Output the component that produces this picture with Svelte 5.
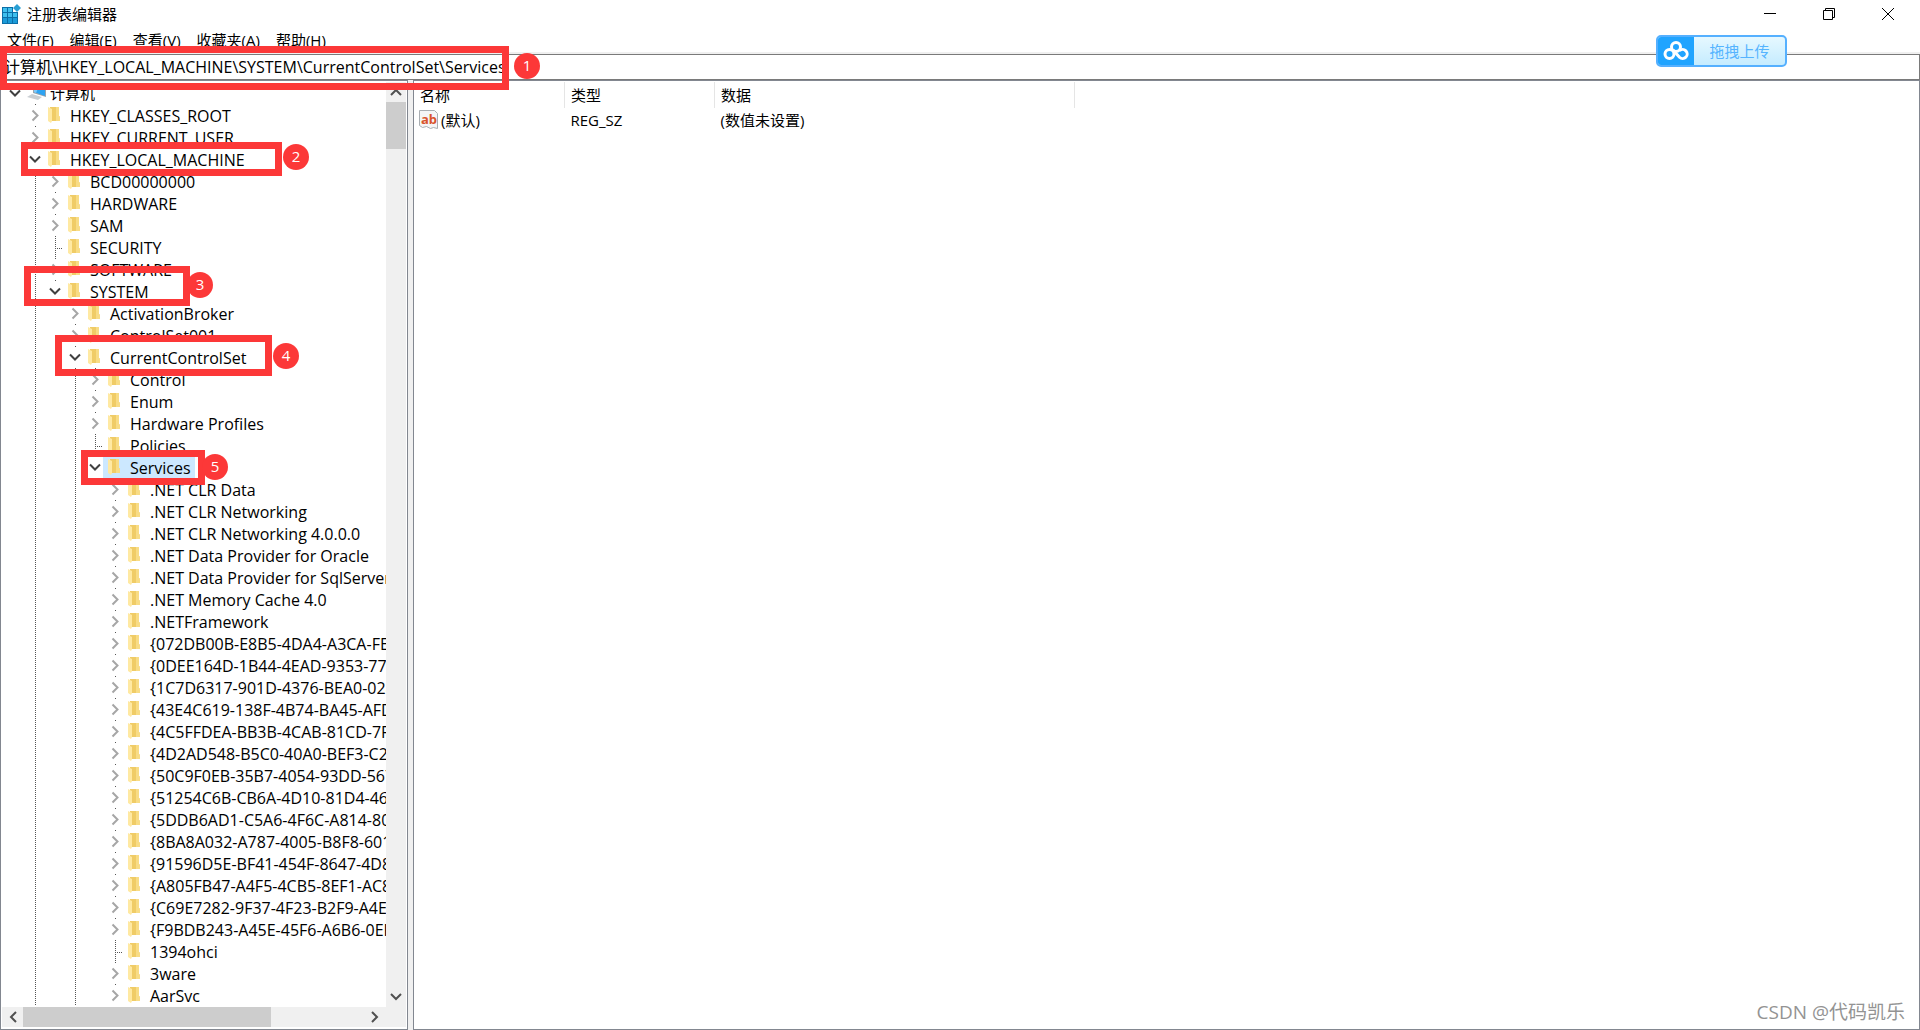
<script>
  const folder = (name, level, state = 'closed') => ({ name, level, state });

  const services = [
    '.NET CLR Data',
    '.NET CLR Networking',
    '.NET CLR Networking 4.0.0.0',
    '.NET Data Provider for Oracle',
    '.NET Data Provider for SqlServer',
    '.NET Memory Cache 4.0',
    '.NETFramework',
    '{072DB00B-E8B5-4DA4-A3CA-FE',
    '{0DEE164D-1B44-4EAD-9353-77E',
    '{1C7D6317-901D-4376-BEA0-028',
    '{43E4C619-138F-4B74-BA45-AFD',
    '{4C5FFDEA-BB3B-4CAB-81CD-7F',
    '{4D2AD548-B5C0-40A0-BEF3-C2',
    '{50C9F0EB-35B7-4054-93DD-567',
    '{51254C6B-CB6A-4D10-81D4-46',
    '{5DDB6AD1-C5A6-4F6C-A814-80',
    '{8BA8A032-A787-4005-B8F8-601',
    '{91596D5E-BF41-454F-8647-4D8',
    '{A805FB47-A4F5-4CB5-8EF1-AC8',
    '{C69E7282-9F37-4F23-B2F9-A4E',
    '{F9BDB243-A45E-45F6-A6B6-0EF',
    '1394ohci',
    '3ware',
    'AarSvc',
  ];

  const rows = [
    folder('计算机', 0, 'open'),
    folder('HKEY_CLASSES_ROOT', 1),
    folder('HKEY_CURRENT_USER', 1),
    folder('HKEY_LOCAL_MACHINE', 1, 'open'),
    folder('BCD00000000', 2),
    folder('HARDWARE', 2),
    folder('SAM', 2),
    folder('SECURITY', 2, 'leaf'),
    folder('SOFTWARE', 2),
    folder('SYSTEM', 2, 'open'),
    folder('ActivationBroker', 3),
    folder('ControlSet001', 3),
    folder('CurrentControlSet', 3, 'open'),
    folder('Control', 4),
    folder('Enum', 4),
    folder('Hardware Profiles', 4),
    folder('Policies', 4, 'leaf'),
    folder('Services', 4, 'open'),
    ...services.map(name => folder(name, 5, name === '1394ohci' ? 'leaf' : 'closed')),
  ];

  // columns whose branch goes on below the visible rows
  const openBranches = [1, 3];

  const menus = ['文件(F)', '编辑(E)', '查看(V)', '收藏夹(A)', '帮助(H)'];

  let selected = 'Services';
  let path = '计算机\\HKEY_LOCAL_MACHINE\\SYSTEM\\CurrentControlSet\\Services';
</script>

<div class="window">
  <header class="title-bar">
    <svg class="app-icon" width="20" height="20" viewBox="0 0 20 20">
      <path fill="#0b6fa8" d="M0 3h16v17H0z" />
      <path fill="#3fc0ee" d="M1 4h4v4H1zM6 4h4v4H6zM1 9h4v4H1zM6 9h4v4H6zM11 9h4v4h-4z" />
      <path fill="#1b9bd8" d="M1 14h4v5H1zM6 14h4v5H6zM11 14h4v5h-4z" />
      <path fill="#fff" d="M11 0h9v8h-9z" />
      <path fill="#2a9fd4" d="M15 0l4 4-4 4-4-4z" />
    </svg>
    <h1>注册表编辑器</h1>
    <div class="controls">
      <button aria-label="最小化">
        <svg width="12" height="12"><path d="M0 5.5h12" /></svg>
      </button>
      <button aria-label="还原">
        <svg width="12" height="12"><path d="M.5 2.5h9v9h-9zM2.5 2.5v-2h9v9h-2" /></svg>
      </button>
      <button aria-label="关闭">
        <svg width="12" height="12"><path d="M0 0l12 12M12 0L0 12" /></svg>
      </button>
    </div>
  </header>

  <nav class="menu-bar">
    {#each menus as menu}
      <button>{menu}</button>
    {/each}
  </nav>

  <input class="address" aria-label="地址" spellcheck="false" bind:value={path} />

  <main>
    <section class="tree-pane">
      <div class="tree-body">
        <div class="tree">
          {#each rows as row}
            <div class="row">
              {#each Array(row.level) as _, column}
                <span class="guide" class:line={openBranches.includes(column)}></span>
              {/each}
              <span class="toggle {row.state}" class:root={row.level === 0}>
                {#if row.state === 'closed'}
                  <svg width="18" height="22"><path d="M7.5 6.5l5 5-5 5" /></svg>
                {:else if row.state === 'open'}
                  <svg width="18" height="22"><path d="M5 8.5l5 5 5-5" /></svg>
                {/if}
              </span>
              <button
                class="label"
                class:root={row.level === 0}
                class:selected={row.name === selected}
                onclick={() => (selected = row.name)}
              >
                {#if row.level === 0}
                  <svg width="20" height="20" viewBox="0 0 20 20">
                    <path fill="#9aa4ac" d="M5 1l13 2v11L5 10z" />
                    <path fill="#2ea3f2" d="M6 2l11 2v9L6 9z" />
                    <path fill="#7cc8fa" d="M6 2l5 1-3 7-2-1z" />
                    <path fill="#c9ced2" d="M-1 14l5-3 10 3-4 3z" />
                  </svg>
                {:else}
                  <svg width="20" height="20" viewBox="0 0 20 20">
                    <path fill="#f0cc66" d="M2 2h9v9l1 1v4H2z" />
                    <path fill="#f8dc85" d="M8 2h3v9l1 1v4H8z" />
                    <path fill="#ffe9a2" d="M0 2l4 2v12l-1 2-3-2z" />
                  </svg>
                {/if}
                {row.name}
              </button>
            </div>
          {/each}
        </div>
        <div class="scroll-y">
          <button aria-label="向上滚动"><svg width="12" height="8"><path d="M1 7l5-5 5 5" /></svg></button>
          <div class="thumb"></div>
          <button class="end" aria-label="向下滚动"><svg width="12" height="8"><path d="M1 1l5 5 5-5" /></svg></button>
        </div>
      </div>
      <div class="scroll-x">
        <button aria-label="向左滚动"><svg width="8" height="12"><path d="M7 1L2 6l5 5" /></svg></button>
        <div class="thumb"></div>
        <button class="end" aria-label="向右滚动"><svg width="8" height="12"><path d="M1 1l5 5-5 5" /></svg></button>
      </div>
    </section>

    <section class="value-pane">
      <table>
        <thead>
          <tr><th class="name">名称</th><th class="type">类型</th><th class="data">数据</th><th></th></tr>
        </thead>
        <tbody>
          <tr>
            <td class="name">
              <div class="value-name">
                <svg width="20" height="20" viewBox="0 0 20 20">
                  <path fill="#f4f5f6" stroke="#a9aeb2" d="M.5.5h15l3 3v15l-4-1-3 1-4-2-4 1-3-2z" />
                  <text x="2" y="14">ab</text>
                </svg>
                (默认)
              </div>
            </td>
            <td>REG_SZ</td>
            <td>(数值未设置)</td>
            <td></td>
          </tr>
        </tbody>
      </table>
    </section>
  </main>

  <button class="upload">
    <span class="upload-logo">
      <svg width="26" height="20" viewBox="0 0 26 20">
        <circle cx="13" cy="6" r="4.5" />
        <circle cx="6.5" cy="13" r="4.5" />
        <path d="M10 9l6.500 7.200a4.500 4.500 0 1 0 0-6.400" />
      </svg>
    </span>
    <span class="upload-text">拖拽上传</span>
  </button>

  <div class="mark mark-1"></div>
  <div class="mark mark-2"></div>
  <div class="mark mark-3"></div>
  <div class="mark mark-4"></div>
  <div class="mark mark-5"></div>
  <span class="step step-1">1</span>
  <span class="step step-2">2</span>
  <span class="step step-3">3</span>
  <span class="step step-4">4</span>
  <span class="step step-5">5</span>

  <div class="watermark">CSDN @代码凯乐</div>
</div>

<style>
  :global(body) {
    margin: 0;
    overflow: hidden;
  }
  .window {
    position: relative;
    display: flex;
    flex-direction: column;
    height: 100vh;
    background-color: white;
    color: black;
    font-family: 'Open Sans', 'Noto Sans CJK SC', sans-serif;
    font-size: 15px;
    line-height: 22px;
  }
  button {
    margin: 0;
    padding: 0;
    border: none;
    background: none;
    color: inherit;
    font: inherit;
  }
  svg {
    flex: none;
    display: block;
    overflow: visible;
  }
  .title-bar {
    display: flex;
    align-items: center;
    height: 28px;
    padding: 0 3px 0 2px;
    gap: 5px;
  }
  h1 {
    margin: 0;
    font-size: 15px;
    font-weight: normal;
  }
  .controls {
    display: flex;
    align-self: stretch;
    margin-left: auto;
  }
  .controls button {
    display: flex;
    align-items: center;
    justify-content: center;
    width: 59px;
  }
  .controls path {
    fill: none;
    stroke: black;
  }
  .menu-bar {
    display: flex;
    align-items: center;
    gap: 16px;
    height: 24px;
    padding: 0 7px;
    border-bottom: 2px solid #f0f0f0;
  }
  .address {
    box-sizing: border-box;
    width: 100%;
    height: 26px;
    margin: 0;
    padding: 0 3px 2px;
    border: 1px solid #7a7a7a;
    outline: none;
    background-color: white;
    font: inherit;
    font-size: 16px;
  }
  main {
    flex: 1;
    display: flex;
    gap: 5px;
    min-height: 0;
    background-color: #f0f0f0;
  }
  section {
    box-sizing: border-box;
    border: 1px solid #828790;
    background-color: white;
  }
  .tree-pane {
    display: flex;
    flex-direction: column;
    width: 408px;
    padding: 1px 1px 2px;
  }
  .tree-body {
    flex: 1;
    display: flex;
    min-height: 0;
  }
  .tree {
    flex: 1;
    overflow: hidden;
    padding-left: 3px;
  }
  .row {
    display: flex;
    height: 22px;
    white-space: nowrap;
  }
  .guide,
  .toggle {
    flex: none;
    width: 20px;
    background-repeat: no-repeat;
    background-position: 10px 0;
  }
  .toggle {
    width: 18px;
    background-image: linear-gradient(#555, #555);
    background-size: 1px 1px;
  }
  .toggle.root {
    background-image: none;
  }
  .line {
    background-image: repeating-linear-gradient(#555 0 1px, transparent 1px 2px);
    background-size: 1px 22px;
  }
  .toggle.leaf {
    background-image:
      repeating-linear-gradient(#555 0 1px, transparent 1px 2px),
      repeating-linear-gradient(90deg, #555 0 1px, transparent 1px 2px);
    background-position: 10px 0, 10px 12px;
    background-size: 1px 22px, 8px 1px;
  }
  .toggle path {
    fill: none;
    stroke: #a6a6a6;
    stroke-width: 2;
  }
  .toggle.open path {
    stroke: #404040;
  }
  .label {
    display: flex;
    align-items: center;
    gap: 2px;
    padding: 2px 4px 0 5px;
    font-size: 16px;
    line-height: 20px;
  }
  .label svg {
    margin-bottom: 2px;
  }
  .label.root {
    padding-top: 0;
    font-size: 15px;
  }
  .label.root svg {
    margin-bottom: 0;
  }
  .label.selected {
    background-color: #cce8ff;
  }
  .scroll-y,
  .scroll-x {
    display: flex;
    background-color: #f0f0f0;
  }
  .scroll-y {
    flex-direction: column;
    width: 20px;
  }
  .scroll-x {
    height: 20px;
    padding: 0 21px 0 1px;
  }
  .scroll-y button,
  .scroll-x button {
    display: flex;
    align-items: center;
    justify-content: center;
    width: 20px;
    height: 20px;
  }
  .scroll-y path,
  .scroll-x path {
    fill: none;
    stroke: #505050;
    stroke-width: 2;
  }
  .scroll-y .end {
    margin-top: auto;
  }
  .scroll-x .end {
    margin-left: auto;
  }
  .thumb {
    background-color: #cdcdcd;
  }
  .scroll-y .thumb {
    height: 47px;
  }
  .scroll-x .thumb {
    width: 65%;
  }
  .value-pane {
    flex: 1;
    padding: 1px 0 0 1px;
  }
  table {
    width: 100%;
    border-collapse: collapse;
    table-layout: fixed;
  }
  th,
  td {
    height: 26px;
    padding: 0 6px;
    text-align: left;
    font-weight: normal;
  }
  th:not(:last-child) {
    border-right: 1px solid #e5e5e5;
  }
  td {
    height: 24px;
  }
  .name {
    width: 138px;
    padding-left: 5px;
  }
  .type {
    width: 137px;
  }
  .data {
    width: 347px;
  }
  td.name {
    padding-left: 4px;
  }
  .value-name {
    display: flex;
    align-items: center;
    gap: 2px;
  }
  .value-name text {
    fill: #d9532c;
    font: bold 13px 'Open Sans', sans-serif;
  }
  .upload {
    position: absolute;
    top: 35px;
    right: 133px;
    display: flex;
    width: 131px;
    height: 32px;
    border: 2px solid #55b0ff;
    border-radius: 5px;
    overflow: hidden;
    background: linear-gradient(#e6f8ff, #c5ecff);
    color: #55b4ff;
  }
  .upload-logo {
    display: flex;
    align-items: center;
    justify-content: center;
    width: 36px;
    height: 28px;
    background-color: #20a4ff;
  }
  .upload-logo svg {
    fill: none;
    stroke: white;
    stroke-width: 3;
  }
  .upload-text {
    flex: 1;
    line-height: 28px;
    text-align: center;
  }
  .mark {
    position: absolute;
    box-sizing: border-box;
    border: 7px solid #fc3838;
    pointer-events: none;
  }
  .mark-1 {
    top: 46px;
    left: 0;
    width: 509px;
    height: 44px;
  }
  .mark-2 {
    top: 142px;
    left: 21px;
    width: 261px;
    height: 34px;
  }
  .mark-3 {
    top: 266px;
    left: 24px;
    width: 166px;
    height: 40px;
  }
  .mark-4 {
    top: 335px;
    left: 55px;
    width: 217px;
    height: 41px;
  }
  .mark-5 {
    top: 450px;
    left: 81px;
    width: 124px;
    height: 35px;
  }
  .step {
    position: absolute;
    width: 26px;
    height: 26px;
    border-radius: 50%;
    background-color: #fc3838;
    color: white;
    line-height: 24px;
    text-align: center;
  }
  .step-1 {
    top: 53px;
    left: 514px;
  }
  .step-2 {
    top: 144px;
    left: 283px;
  }
  .step-3 {
    top: 272px;
    left: 187px;
  }
  .step-4 {
    top: 343px;
    left: 273px;
  }
  .step-5 {
    top: 454px;
    left: 202px;
  }
  .watermark {
    position: absolute;
    right: 15px;
    bottom: 6px;
    color: #939393;
    font-size: 19px;
    line-height: 24px;
  }
</style>
